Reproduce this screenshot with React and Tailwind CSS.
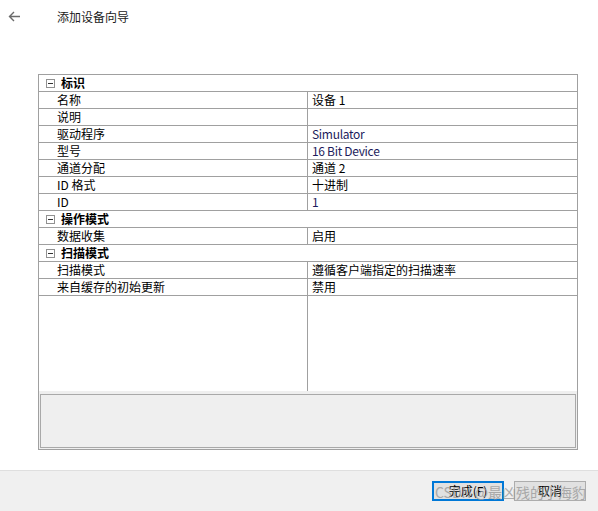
import React from "react";

const rows = [
  { group: "标识" },
  { name: "名称", value: "设备 1" },
  { name: "说明", value: "" },
  { name: "驱动程序", value: "Simulator", dim: true },
  { name: "型号", value: "16 Bit Device", dim: true },
  { name: "通道分配", value: "通道 2" },
  { name: "ID 格式", value: "十进制" },
  { name: "ID", value: "1", dim: true },
  { group: "操作模式" },
  { name: "数据收集", value: "启用" },
  { group: "扫描模式" },
  { name: "扫描模式", value: "遵循客户端指定的扫描速率" },
  { name: "来自缓存的初始更新", value: "禁用" },
];

const font = { fontFamily: '"Noto Sans CJK SC", "Liberation Sans", sans-serif' };

const Collapse = () => (
  <span className="flex w-[9px] h-[9px] items-center justify-center border border-[#919191] bg-white">
    <span className="block w-[5px] h-px bg-[#333]" />
  </span>
);

const PropRow = ({ row }) => {
  if (row.group) {
    return (
      <div className="flex h-[17px] items-center border-b border-[#a0a0a0]">
        <div className="w-[22px] flex justify-center">
          <Collapse />
        </div>
        <span className="font-bold text-[12px] leading-[16px] text-black">{row.group}</span>
      </div>
    );
  }
  return (
    <div className="flex h-[17px] border-b border-[#a0a0a0]">
      <div className="w-[269px] pl-[18px] text-[12px] leading-[16px] text-black border-r border-[#a0a0a0]">
        {row.name}
      </div>
      <div
        className={
          "flex-1 pl-[4px] text-[12px] leading-[16px] " +
          (row.dim ? "text-[#1c1c5c] tracking-[-0.3px]" : "text-black")
        }
      >
        {row.value}
      </div>
    </div>
  );
};

export default function App() {
  return (
    <div className="relative w-[598px] h-[511px] bg-white flex flex-col" style={font}>
      {/* title bar */}
      <div className="flex items-center h-[32px] pt-[1px]">
        <svg className="ml-[8px]" width="13" height="11" viewBox="0 0 13 11" fill="none">
          <path d="M12 5.5H1.5M6 1L1.5 5.5L6 10" stroke="#6b6b6b" strokeWidth="1.4" />
        </svg>
        <span className="ml-[36px] text-[12px] text-[#1a1a1a]">添加设备向导</span>
      </div>

      {/* property grid */}
      <div className="mt-[42px] ml-[38px] w-[540px] h-[376px] border border-[#a0a0a0] flex flex-col">
        {rows.map((row, i) => (
          <PropRow key={i} row={row} />
        ))}
        <div className="flex-1 flex">
          <div className="w-[269px] border-r border-[#a0a0a0]" />
        </div>
        <div className="h-[58px] bg-[#efefef] pt-[3px] px-px pb-px">
          <div className="h-full border border-[#a9a9a9] bg-[#efefef]" />
        </div>
      </div>

      {/* footer */}
      <div className="mt-auto h-[41px] bg-[#f0f0f0] border-t border-[#dfdfdf] flex justify-end items-start pt-[10px] pr-[12px] gap-[10px]">
        <button className="w-[72px] h-[20px] border-2 border-[#0078d7] bg-[#e1e1e1] text-[12px] leading-[14px] text-black">
          完成(F)
        </button>
        <button className="w-[72px] h-[20px] border border-[#adadad] bg-[#e1e1e1] text-[12px] leading-[16px] text-black">
          取消
        </button>
      </div>

      {/* watermark */}
      <div className="absolute left-[435px] top-[482px] text-[14px] text-[#9a9a9a] opacity-80 pointer-events-none">
        CSDN @最凶残的小海豹
      </div>
    </div>
  );
}
